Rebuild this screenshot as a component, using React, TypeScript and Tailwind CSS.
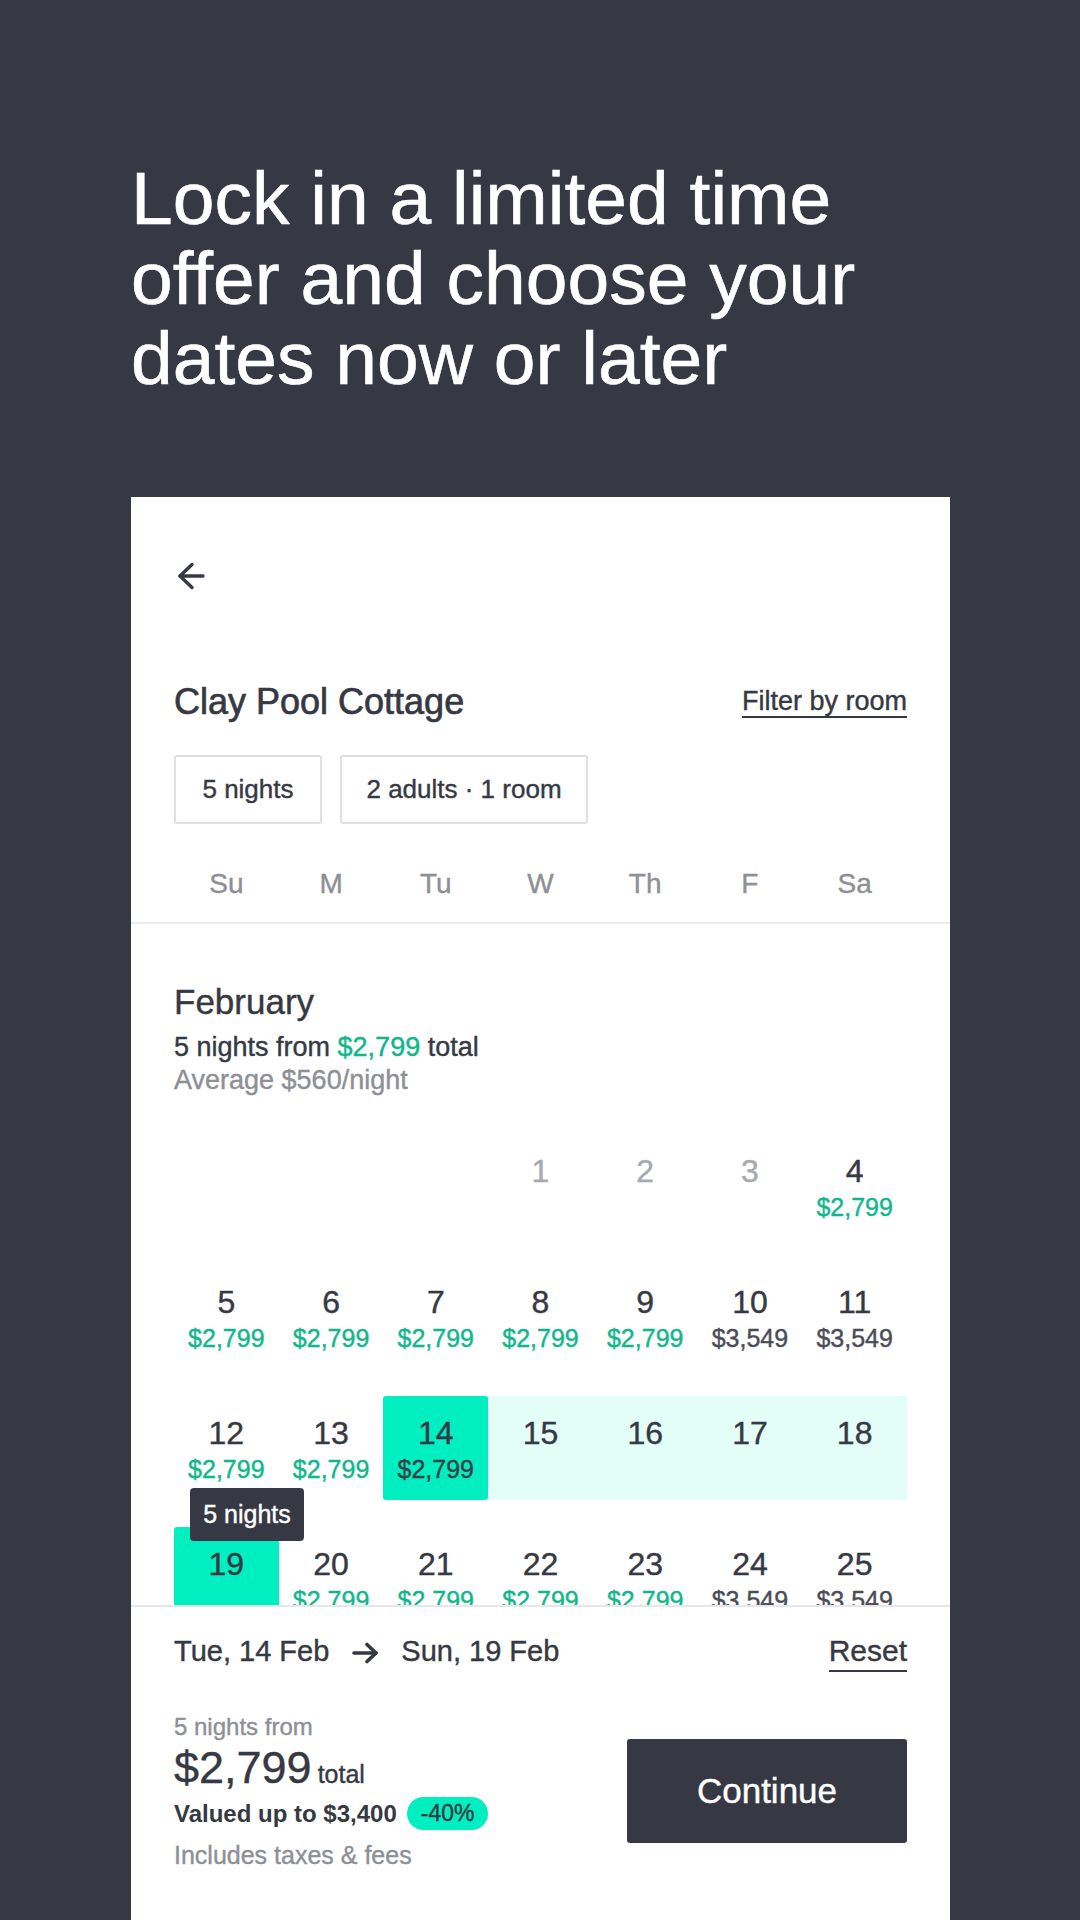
import React from 'react';

type Day = {
  n?: number;
  price?: string;
  tone?: 'green' | 'dark' | 'muted';
  state?: 'start' | 'range' | 'end';
};

const weekdays = ['Su', 'M', 'Tu', 'W', 'Th', 'F', 'Sa'];

const weeks: Day[][] = [
  [{}, {}, {}, { n: 1, tone: 'muted' }, { n: 2, tone: 'muted' }, { n: 3, tone: 'muted' }, { n: 4, price: '$2,799', tone: 'green' }],
  [
    { n: 5, price: '$2,799', tone: 'green' },
    { n: 6, price: '$2,799', tone: 'green' },
    { n: 7, price: '$2,799', tone: 'green' },
    { n: 8, price: '$2,799', tone: 'green' },
    { n: 9, price: '$2,799', tone: 'green' },
    { n: 10, price: '$3,549', tone: 'dark' },
    { n: 11, price: '$3,549', tone: 'dark' },
  ],
  [
    { n: 12, price: '$2,799', tone: 'green' },
    { n: 13, price: '$2,799', tone: 'green' },
    { n: 14, price: '$2,799', tone: 'dark', state: 'start' },
    { n: 15, state: 'range' },
    { n: 16, state: 'range' },
    { n: 17, state: 'range' },
    { n: 18, state: 'range' },
  ],
  [
    { n: 19, state: 'end' },
    { n: 20, price: '$2,799', tone: 'green' },
    { n: 21, price: '$2,799', tone: 'green' },
    { n: 22, price: '$2,799', tone: 'green' },
    { n: 23, price: '$2,799', tone: 'green' },
    { n: 24, price: '$3,549', tone: 'dark' },
    { n: 25, price: '$3,549', tone: 'dark' },
  ],
  [
    { n: 26, price: '$3,549', tone: 'dark' },
    { n: 27, price: '$2,799', tone: 'green' },
    { n: 28, price: '$2,799', tone: 'green' },
    {}, {}, {}, {},
  ],
];

const BackArrow = () => (
  <svg width="28" height="28" viewBox="0 0 28 28" fill="none" stroke="#363944" strokeWidth="3.4" strokeLinecap="round" strokeLinejoin="round">
    <path d="M26 14H3" />
    <path d="M15 2.5 3 14l12 11.5" />
  </svg>
);

const RightArrow = () => (
  <svg width="28" height="22" viewBox="0 0 28 22" fill="none" stroke="#363944" strokeWidth="3.6" strokeLinecap="round" strokeLinejoin="round">
    <path d="M3 11h22" />
    <path d="M16 2.5 25 11l-9 8.5" />
  </svg>
);

const DayCell: React.FC<{ day: Day }> = ({ day }) => {
  if (!day.n) return <div className="h-[104px]" />;

  let bg = '';
  if (day.state === 'start' || day.state === 'end') bg = 'bg-[#00efc1] rounded-[3px]';
  if (day.state === 'range') bg = 'bg-[#e3fdf7]';

  const numColor = day.tone === 'muted' ? 'text-[#a7a9ae]' : 'text-[#363944]';
  const priceColor =
    day.state === 'start' ? 'text-[#3b3e48]' : day.tone === 'green' ? 'text-[#0fb78b]' : 'text-[#4a4d57]';

  return (
    <div className={`relative h-[104px] flex flex-col items-center pt-[19px] ${bg}`}>
      {day.state === 'end' && (
        <div className="absolute left-[16px] top-[-39px] w-[114px] h-[53px] rounded-[4px] bg-[#363944] flex items-center justify-center text-white text-[25px] z-10">
          5 nights
        </div>
      )}
      <span className={`text-[32px] leading-[36px] ${numColor}`}>{day.n}</span>
      {day.price && <span className={`mt-[4px] text-[25px] leading-[28px] ${priceColor}`}>{day.price}</span>}
    </div>
  );
};

export default function App() {
  return (
    <div className="w-[1080px] h-[1920px] overflow-hidden bg-[#363944] font-['Liberation_Sans',Arial,sans-serif] text-[#363944]">
      {/* Headline */}
      <h1 className="pt-[158px] pl-[131px] text-white text-[75px] leading-[80px] font-normal [-webkit-text-stroke-width:0.6px]">
        Lock in a limited time
        <br />
        offer and choose your
        <br />
        dates now or later
      </h1>

      {/* Card */}
      <div className="mt-[99px] ml-[131px] w-[819px] h-[1423px] bg-white flex flex-col [-webkit-text-stroke-width:0.4px]">
        <div className="px-[43px]">
          <div className="pt-[65px] pl-[3px] h-[97px]">
            <BackArrow />
          </div>

          <div className="mt-[88px] h-[40px] flex items-center justify-between">
            <span className="text-[36px] leading-[40px] [-webkit-text-stroke-width:0.7px]">Clay Pool Cottage</span>
            <span className="text-[27px] leading-[30px] border-b-2 border-[#363944]">Filter by room</span>
          </div>

          <div className="mt-[33px] flex gap-[18px]">
            <div className="w-[148px] h-[69px] border-2 border-[#dfe0e2] rounded-[3px] flex items-center justify-center text-[26px]">
              5 nights
            </div>
            <div className="w-[248px] h-[69px] border-2 border-[#dfe0e2] rounded-[3px] flex items-center justify-center text-[26px]">
              2 adults · 1 room
            </div>
          </div>

          <div className="mt-[40px] mb-[18px] grid grid-cols-7 h-[40px] items-center">
            {weekdays.map((d) => (
              <span key={d} className="text-center text-[28px] leading-[40px] text-[#8d9096]">
                {d}
              </span>
            ))}
          </div>
        </div>

        <div className="h-[2px] bg-[#ebecee]" />

        {/* Calendar */}
        <div className="h-[681px] overflow-hidden px-[43px] pt-[59px]">
          <div className="text-[35px] leading-[38px]">February</div>
          <div className="mt-[10px] text-[27px] leading-[33px]">
            5 nights from <span className="text-[#0fb78b]">$2,799</span> total
          </div>
          <div className="text-[27px] leading-[33px] text-[#8d9096]">Average $560/night</div>

          <div className="mt-[37px] grid grid-cols-7 gap-y-[27px]">
            {weeks.flat().map((day, i) => (
              <DayCell key={i} day={day} />
            ))}
          </div>
        </div>

        {/* Bottom sheet */}
        <div className="flex-1 border-t-2 border-[#e6e7e9] px-[43px] pt-[27px]">
          <div className="flex items-start justify-between">
            <div className="flex items-center h-[34px] text-[29px] leading-[34px]">
              <span>Tue, 14 Feb</span>
              <span className="mx-[22px] pt-[4px]">
                <RightArrow />
              </span>
              <span>Sun, 19 Feb</span>
            </div>
            <span className="text-[30px] leading-[34px] pb-[2px] border-b-2 border-[#363944]">Reset</span>
          </div>

          <div className="mt-[40px] flex items-start justify-between">
            <div className="flex flex-col">
              <span className="text-[24px] leading-[30px] text-[#8d9096]">5 nights from</span>
              <div className="mt-[2px] flex items-baseline gap-[6px]">
                <span className="text-[45px] leading-[48px]">$2,799</span>
                <span className="text-[25px]">total</span>
              </div>
              <div className="mt-[3px] flex items-center gap-[10px] h-[34px]">
                <span className="text-[24px] font-bold [-webkit-text-stroke-width:0px]">Valued up to $3,400</span>
                <span className="h-[33px] px-[14px] rounded-full bg-[#00efc1] flex items-center text-[23px] text-[#363944]">
                  -40%
                </span>
              </div>
              <span className="mt-[9px] text-[25px] leading-[30px] text-[#8d9096]">Includes taxes &amp; fees</span>
            </div>

            <button className="mt-[27px] w-[280px] h-[104px] rounded-[3px] bg-[#363944] text-white text-[35px]">
              Continue
            </button>
          </div>
        </div>
      </div>
    </div>
  );
}
